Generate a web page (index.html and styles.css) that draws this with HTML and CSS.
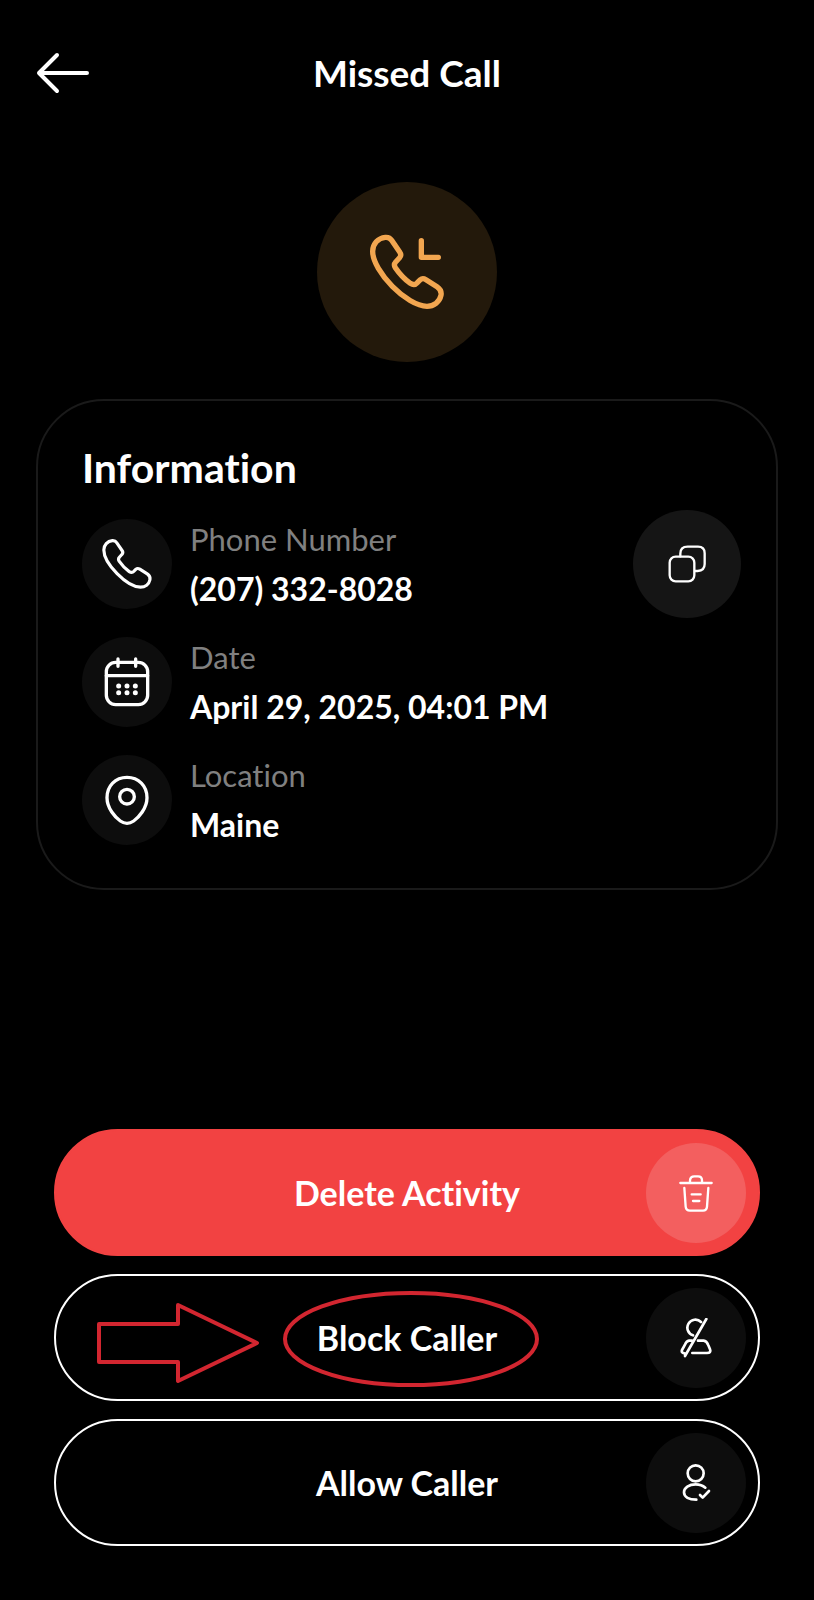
FILE: index.html
```html
<!DOCTYPE html>
<html lang="en">
<head>
    <meta charset="UTF-8">
    <meta name="viewport" content="width=device-width, initial-scale=1.0">
    <title>Missed Call</title>
    <link rel="stylesheet" href="styles.css">
</head>
<body>
    <div class="container">
        <header class="header">
            <button class="back" aria-label="Back">
                <svg viewBox="0 0 54 42" width="54" height="42">
                    <path d="M21 3L3 21l18 18M3 21h48" stroke-width="4"/>
                </svg>
            </button>
            <h1>Missed Call</h1>
        </header>

        <main class="isi">
            <div class="call-icon">
                <svg viewBox="170 172 240 240" width="80" height="80">
                    <path d="M244 197L268 232Q275 242 267 250L256 262Q249 270 255 279Q275 308 300 326Q312 334 321 324L330 315Q337 309 347 315L380 336Q395 346 392 362C388 382 370 395 350 395C290 395 187 290 187 230C187 208 203 190 225 188Q238 187 244 197ZM333 198V248H384" stroke-width="16"/>
                </svg>
            </div>

            <section class="card">
                <h2>Information</h2>
                <div class="info">
                    <div class="info-icon">
                        <svg viewBox="170 172 240 240" width="54" height="54">
                            <path d="M244 197L268 232Q275 242 267 250L256 262Q249 270 255 279Q275 308 300 326Q312 334 321 324L330 315Q337 309 347 315L380 336Q395 346 392 362C388 382 370 395 350 395C290 395 187 290 187 230C187 208 203 190 225 188Q238 187 244 197Z" stroke-width="14"/>
                        </svg>
                    </div>
                    <div class="info-text">
                        <span class="label">Phone Number</span>
                        <span class="value">(207) 332-8028</span>
                    </div>
                    <button class="copy" aria-label="Copy number">
                        <svg viewBox="142 136 120 120" width="40" height="40">
                            <rect x="150" y="174" width="74" height="74" rx="18" stroke-width="7"/>
                            <path d="M182 173V165Q182 144 204 144H235Q255 144 255 164V196Q255 216 234 217H226" stroke-width="7"/>
                        </svg>
                    </button>
                </div>
                <div class="info">
                    <div class="info-icon">
                        <svg viewBox="80 68 180 180" width="60" height="60">
                            <rect x="108" y="99" width="124" height="127" rx="28" stroke-width="10"/>
                            <path d="M108 139H232M143 89V111M196 89V111" stroke-width="10"/>
                            <path d="M145 170h0M170 170h0M195 170h0M145 190h0M170 190h0M195 190h0" stroke-width="15"/>
                        </svg>
                    </div>
                    <div class="info-text">
                        <span class="label">Date</span>
                        <span class="value">April 29, 2025, 04:01 PM</span>
                    </div>
                </div>
                <div class="info">
                    <div class="info-icon">
                        <svg viewBox="80 420 180 180" width="60" height="60">
                            <path d="M170 442C135 442 110 468 110 503C110 535 135 562 150 573Q170 587 190 573C205 562 230 535 230 503C230 468 205 442 170 442Z" stroke-width="10"/>
                            <circle cx="170" cy="500" r="22" stroke-width="10"/>
                        </svg>
                    </div>
                    <div class="info-text">
                        <span class="label">Location</span>
                        <span class="value">Maine</span>
                    </div>
                </div>
            </section>
        </main>

        <footer class="actions">
            <button class="btn delete">
                <span class="btn-text">Delete Activity</span>
                <span class="btn-icon">
                    <svg viewBox="139 158 120 120" width="40" height="40">
                        <path d="M152 188H246M181 187V180Q182 168 194 168H205Q217 168 217 180V187M164 203L168 259Q169 271 181 271H220Q231 271 232 259L236 203M186 222H213M190 242H209" stroke-width="7"/>
                    </svg>
                </span>
            </button>
            <button class="btn">
                <span class="btn-text">Block Caller</span>
                <span class="btn-icon">
                    <svg viewBox="139 144 120 120" width="40" height="40">
                        <path d="M214 156A24 24 0 1 0 190 196M230 147L166 258M187 212H178Q170 213 166 224L157 240Q154 248 164 250M205 212H222Q231 213 236 226L241 238Q245 249 232 249H188" stroke-width="8"/>
                    </svg>
                </span>
                <!-- hand drawn marks on top of the button -->
                <svg class="mark-arrow" viewBox="0 0 164 82" width="164" height="82">
                    <path d="M3 22H82V3L161 41L82 79V60H3Z"/>
                </svg>
                <svg class="mark-circle" viewBox="0 0 256 98" width="256" height="98">
                    <ellipse cx="128" cy="49" rx="126" ry="46"/>
                </svg>
            </button>
            <button class="btn">
                <span class="btn-text">Allow Caller</span>
                <span class="btn-icon">
                    <svg viewBox="139 157 120 120" width="40" height="40">
                        <circle cx="198" cy="188" r="24" stroke-width="8"/>
                        <path d="M227 231C219 224 210 221 198 221C178 221 163 231 163 245C163 259 178 267 200 267M211 253L219 261L238 241" stroke-width="8"/>
                    </svg>
                </span>
            </button>
        </footer>
    </div>
</body>
</html>
```

FILE: styles.css
```css
* {
    margin: 0;
    padding: 0;
    box-sizing: border-box;
    font-family: Lato, "Open Sans", sans-serif;
    font-variant-ligatures: none;
}
body {
    background-color: #000;
    color: #fff;
}
button {
    border: none;
    background: none;
    color: #fff;
    cursor: pointer;
}
svg {
    display: block;
    fill: none;
    stroke: currentColor;
    stroke-linecap: round;
    stroke-linejoin: round;
}
.container {
    min-height: 100vh;
    padding: 43px 36px 54px;
    display: flex;
    flex-direction: column;
}

/* header */
.header {
    height: 60px;
    display: grid;
    grid-template-columns: 54px 1fr 54px;
    align-items: center;
}
.header h1 {
    font-size: 37px;
    line-height: 44px;
    font-weight: 700;
    text-align: center;
}

/* isi */
.call-icon {
    width: 180px;
    height: 180px;
    margin: 79px auto 37px;
    border-radius: 50%;
    background-color: #23190b;
    color: #f2a650;
    display: flex;
    align-items: center;
    justify-content: center;
}
.card {
    border: 2px solid #1a1a1a;
    border-radius: 68px;
    padding: 42px 35px 39px 44px;
    display: flex;
    flex-direction: column;
    gap: 20px;
}
.card h2 {
    margin-bottom: 2px;
    font-size: 41px;
    line-height: 50px;
    font-weight: 700;
}
.info {
    height: 98px;
    display: flex;
    align-items: center;
    gap: 18px;
}
.info-icon {
    width: 90px;
    height: 90px;
    border-radius: 50%;
    background-color: #0d0d0d;
    display: flex;
    align-items: center;
    justify-content: center;
}
.info-text {
    flex: 1;
    display: flex;
    flex-direction: column;
    font-size: 32px;
    line-height: 49px;
}
.label {
    color: #808080;
    font-size: 31px;
    font-weight: 400;
}
.value {
    font-weight: 700;
}
.copy {
    width: 108px;
    height: 108px;
    border-radius: 50%;
    background-color: #151515;
    display: flex;
    align-items: center;
    justify-content: center;
}

/* tombol */
.actions {
    margin-top: auto;
    padding: 0 18px;
    display: flex;
    flex-direction: column;
    gap: 18px;
}
.btn {
    position: relative;
    height: 127px;
    padding: 0 12px 0 112px;
    border: 2px solid #fff;
    border-radius: 64px;
    display: flex;
    align-items: center;
}
.btn-text {
    flex: 1;
    font-size: 34px;
    font-weight: 700;
}
.btn-icon {
    width: 100px;
    height: 100px;
    border-radius: 50%;
    background-color: #0d0d0d;
    display: flex;
    align-items: center;
    justify-content: center;
}
.delete {
    border-color: #f24242;
    background-color: #f24242;
}
.delete .btn-icon {
    background-color: #f35f5f;
}
.mark-arrow,
.mark-circle {
    position: absolute;
    stroke: #d22630;
    stroke-width: 4;
}
.mark-arrow {
    top: 26px;
    left: 40px;
}
.mark-circle {
    top: 14px;
    left: calc(50% - 124px);
}
```
